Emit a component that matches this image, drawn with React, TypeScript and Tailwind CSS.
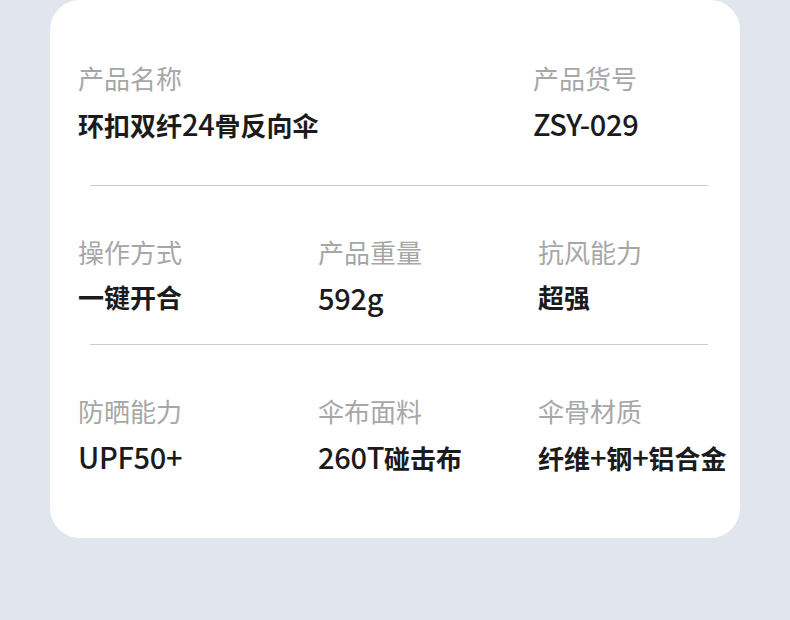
import React from "react";

const font = { fontFamily: '"Noto Sans CJK SC", "Noto Sans", sans-serif' };

function Value({ text }: { text: string }) {
  const parts = text.match(/[\x00-\x7F]+|[^\x00-\x7F]+/g) || [];
  return (
    <>
      {parts.map((p, i) =>
        /^[\x00-\x7F]+$/.test(p) ? (
          <span key={i} className="text-[29px] font-medium leading-[36px] tracking-[-0.3px]">{p}</span>
        ) : (
          <span key={i} className="text-[26px] font-semibold leading-[36px]">{p}</span>
        )
      )}
    </>
  );
}

function Item({ label, value, className = "" }: { label: string; value: string; className?: string }) {
  return (
    <div className={className}>
      <div className="text-[26px] leading-[36px] text-[#a7a7a7] font-normal whitespace-nowrap">{label}</div>
      <div className="mt-[9px] h-[36px] leading-[36px] text-[#1b1b1b] whitespace-nowrap">
        <Value text={value} />
      </div>
    </div>
  );
}

export default function App() {
  return (
    <div className="w-[790px] h-[620px] bg-[#e1e5ed] overflow-hidden" style={font}>
      <div className="ml-[50px] w-[690px] h-[538px] bg-white rounded-[30px] pt-[60px]">
        <div className="flex pl-[28px]">
          <Item className="w-[455px]" label="产品名称" value="环扣双纤24骨反向伞" />
          <Item label="产品货号" value="ZSY-029" />
        </div>
        <div className="ml-[40px] mr-[32px] mt-[44px] h-px bg-[#cccccc]" />
        <div className="flex pl-[28px] mt-[48px]">
          <Item className="w-[240px]" label="操作方式" value="一键开合" />
          <Item className="w-[220px]" label="产品重量" value="592g" />
          <Item label="抗风能力" value="超强" />
        </div>
        <div className="ml-[40px] mr-[32px] mt-[29px] h-px bg-[#cccccc]" />
        <div className="flex pl-[28px] mt-[48px]">
          <Item className="w-[240px]" label="防晒能力" value="UPF50+" />
          <Item className="w-[220px]" label="伞布面料" value="260T碰击布" />
          <Item label="伞骨材质" value="纤维+钢+铝合金" />
        </div>
      </div>
    </div>
  );
}
